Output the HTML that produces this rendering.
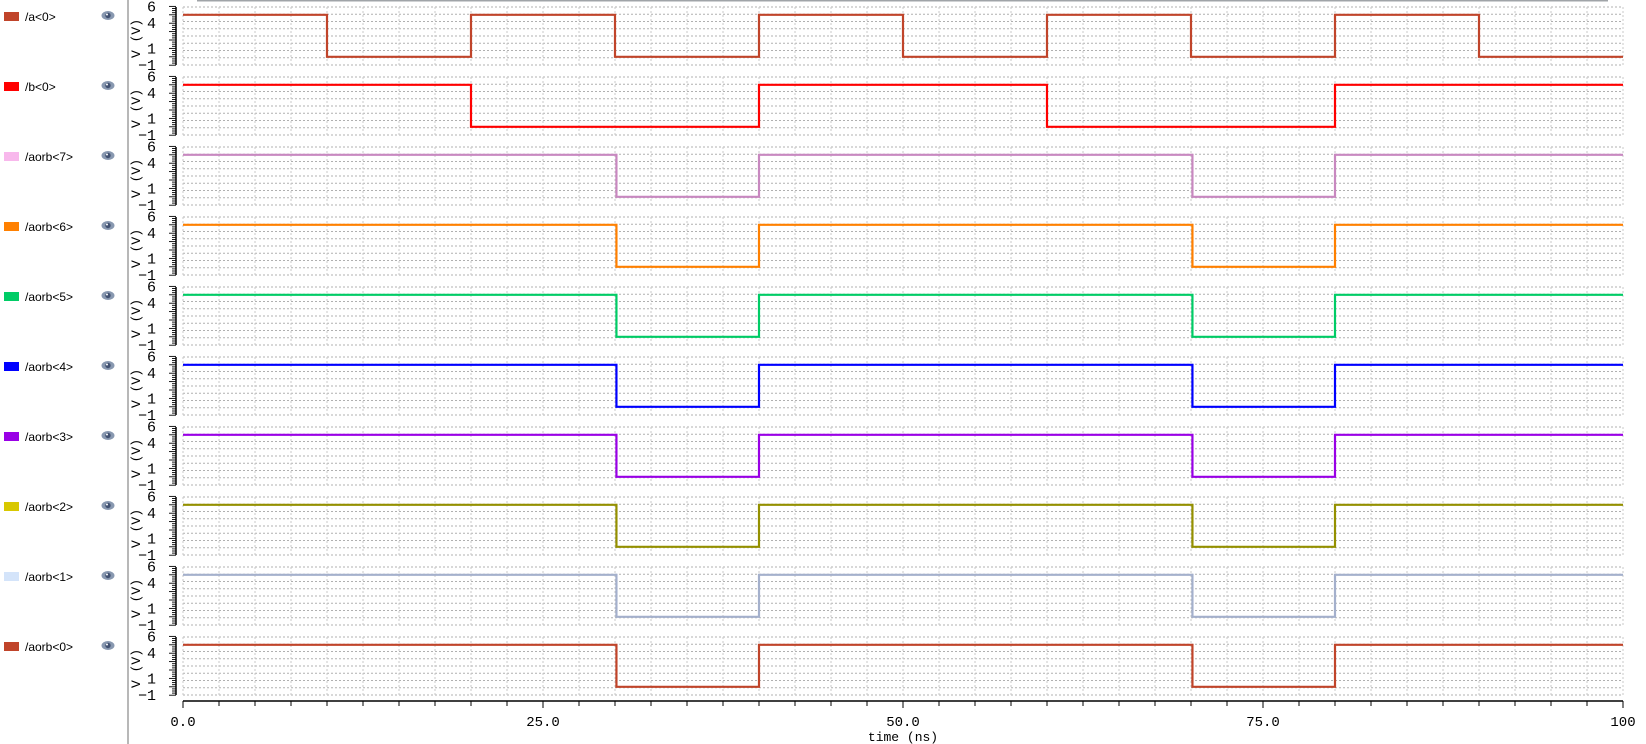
<!DOCTYPE html>
<html><head><meta charset="utf-8"><style>
html,body{margin:0;padding:0;background:#fff;width:1646px;height:744px;overflow:hidden}
svg{display:block}
text{font-family:"Liberation Sans",sans-serif}
.m{font-family:"Liberation Mono",monospace}
</style></head><body>
<svg id="s" width="1646" height="744" xmlns="http://www.w3.org/2000/svg"></svg>
<script>
const s=document.getElementById('s');let h='';
const X=t=>183+14.4*t;
const sig=[
['/a<0>','#c0442a','#c0442a','a'],
['/b<0>','#ff0000','#ff0000','b'],
['/aorb<7>','#f8b8ec','#c888c0','o'],
['/aorb<6>','#ff8000','#ff8000','o'],
['/aorb<5>','#00cc66','#00cc66','o'],
['/aorb<4>','#0000ff','#0000ff','o'],
['/aorb<3>','#9900e6','#9900e6','o'],
['/aorb<2>','#d8c800','#949000','o'],
['/aorb<1>','#d4e4fa','#a4b0cc','o'],
['/aorb<0>','#c0442a','#c0442a','o']];
h+='<line x1="197" y1="0.5" x2="1608" y2="0.5" stroke="#a0a4a8" stroke-width="2"/>';
h+='<rect x="127" y="0" width="2" height="744" fill="#b8b8b8"/>';
sig.forEach((g,i)=>{
 const o=70*i, Y=v=>o+56.8-v*8.4;
 h+=`<rect x="4" y="${o+12}" width="15" height="9" fill="${g[1]}"/>`;
 h+=`<text x="25" y="${o+21}" font-size="12" fill="#000">${g[0].replace(/</g,'&lt;').replace(/>/g,'&gt;')}</text>`;
 h+=`<ellipse cx="108" cy="${o+15.5}" rx="6.5" ry="4.5" fill="#8898b0"/><circle cx="108" cy="${o+15.5}" r="2.7" fill="#405070"/><circle cx="107" cy="${o+14.5}" r="1" fill="#fff"/>`;
 const gt=o+7,gb=o+65;
 for(let k=0;k<=8;k++){const y=gt+k*(gb-gt)/8;h+=`<line x1="183" y1="${y}" x2="1623" y2="${y}" stroke="#b0b0b0" stroke-dasharray="2 2"/>`;}
 for(let t=0;t<=100;t+=2.5){h+=`<line x1="${X(t)}" y1="${gt}" x2="${X(t)}" y2="${gb}" stroke="#c8c8c8" stroke-dasharray="2 2"/>`;}
 h+=`<line x1="176" y1="${gt}" x2="176" y2="${gb}" stroke="#000" stroke-width="1.5"/>`;
 for(let k=0;k<=28;k++){const y=Y(6-k*0.25);h+=`<line x1="${k%4==0?169:172}" y1="${y}" x2="176" y2="${y}" stroke="#000" stroke-width="0.9"/>`;}
 [['6',6],['4',4],['1',1],['\u22121',-1]].forEach(l=>{h+=`<text class="m" x="156" y="${Y(l[1])+5}" font-size="15" text-anchor="end">${l[0]}</text>`;});
 h+=`<text class="m" x="0" y="0" font-size="13" transform="translate(140 ${o+58}) rotate(-90)">V (V)</text>`;
 let tr;
 if(g[3]=='a'){tr=[[0,1],[10,0],[20,1],[30,0],[40,1],[50,0],[60,1],[70,0],[80,1],[90,0]];}
 else if(g[3]=='b'){tr=[[0,1],[20,0],[40,1],[60,0],[80,1]];}
 else tr=[[0,1],[30.1,0],[40,1],[70.1,0],[80,1]];
 let d='';
 tr.forEach((p,j)=>{const y=p[1]?Y(5):Y(0);const xx=X(p[0]);d+=(j?'L'+xx+' '+(tr[j-1][1]?Y(5):Y(0))+' L':'M')+xx+' '+y+' ';});
 d+='L1623 '+(tr[tr.length-1][1]?Y(5):Y(0));
 h+=`<path d="${d}" fill="none" stroke="${g[2]}" stroke-width="2.2"/>`;
});
h+='<line x1="183" y1="701" x2="1623" y2="701" stroke="#000" stroke-width="1.5"/>';
for(let t=0;t<=100;t+=2.5){h+=`<line x1="${X(t)}" y1="701" x2="${X(t)}" y2="${t%25==0?708:706}" stroke="#000"/>`;}
[['0.0',0],['25.0',25],['50.0',50],['75.0',75],['100',100]].forEach(l=>{h+=`<text class="m" x="${X(l[1])}" y="726" font-size="14" text-anchor="middle">${l[0]}</text>`;});
h+='<text class="m" x="903" y="741" font-size="13" text-anchor="middle">time (ns)</text>';
s.innerHTML=h;
</script>
</body></html>
